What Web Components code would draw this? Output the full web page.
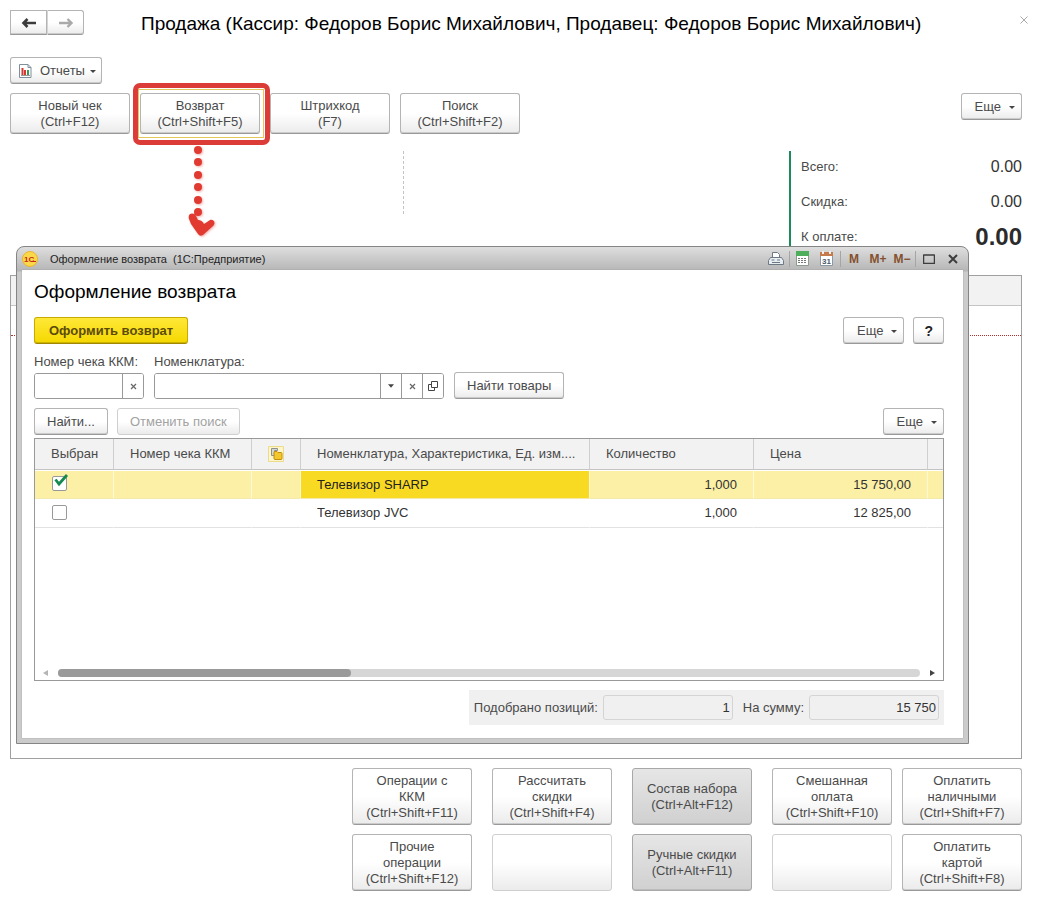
<!DOCTYPE html>
<html lang="ru">
<head>
<meta charset="utf-8">
<meta name="viewport" content="width=device-width, initial-scale=1">
<title>Продажа</title>
<style>
    body {
        margin: 0;
        background: #fff;
        color: #4a4a4a;
        font: 13px/16px "Liberation Sans", Arial, sans-serif;
    }
</style>
</head>
<body>
<sale-page></sale-page>

<script>
// Small helper: every element renders a static template once
class BaseElement extends HTMLElement {
    connectedCallback() {
        if (this.shadowRoot) return;
        this.attachShadow({ mode: 'open' });
        this.shadowRoot.innerHTML = this.render();
    }
}

class UiButton extends BaseElement {
    render() {
        const disabled = this.hasAttribute('disabled') ? 'disabled' : '';
        const caret = this.hasAttribute('menu') ? '<span class="caret"></span>' : '';
        const label = this.getAttribute('label') ? `aria-label="${this.getAttribute('label')}"` : '';
        return `
            <style>
                :host { display: inline-block; }
                button {
                    box-sizing: border-box;
                    width: 100%;
                    height: 100%;
                    min-height: 27px;
                    padding: 0 12px;
                    display: flex;
                    align-items: center;
                    justify-content: center;
                    border: 1px solid #b4b4b4;
                    border-bottom-color: #999;
                    border-radius: 3px;
                    background: linear-gradient(#fff 50%, #ebebeb);
                    box-shadow: inset 0 -1px 0 #cbcbcb;
                    color: inherit;
                    font: inherit;
                    white-space: nowrap;
                }
                button:hover { background: #f4f4f4; }
                :host([disabled]) button {
                    color: #a2a2a2;
                    border-color: #cfcfcf;
                    box-shadow: none;
                }
                :host([tall]) button { min-height: 41px; padding: 0 4px; }
                :host([large]) button { min-height: 57px; padding: 0 4px; }
                :host([menu]) button { padding: 0 6px 0 13px; }
                :host([icon]) button { padding: 0 5px 0 8px; }
                :host([square]) button { padding: 0 10px; color: #222; font-size: 14px; font-weight: bold; }
                :host([pressed]) button {
                    background: linear-gradient(#e6e6e6, #d0d0d0);
                    border-color: #a8a8a8;
                    box-shadow: inset 0 -1px 0 #bcbcbc;
                }
                :host([primary]) button {
                    padding: 0 14px;
                    border-color: #c9ab00;
                    border-bottom-color: #a08800;
                    background: linear-gradient(#ffe838, #f5d800);
                    box-shadow: inset 0 -1px 0 #cdb200;
                    color: #5c4b08;
                    font-weight: bold;
                }
                .caret {
                    margin: 2px 0 0 8px;
                    border: 3px solid transparent;
                    border-top-color: #444;
                    border-bottom: 0;
                }
                :host([icon]) .caret { margin-left: 5px; }
            </style>
            <button type="button" ${disabled} ${label}><slot name="icon"></slot><span><slot></slot></span>${caret}</button>
        `;
    }
}

class HistoryNav extends BaseElement {
    render() {
        return `
            <style>
                :host { display: flex; }
                button {
                    box-sizing: border-box;
                    width: 37px;
                    height: 25px;
                    padding: 0;
                    border: 1px solid #b4b4b4;
                    border-bottom-color: #999;
                    background: linear-gradient(#fff 50%, #ebebeb);
                    box-shadow: inset 0 -1px 0 #cbcbcb;
                    color: #3c3c3c;
                }
                button:first-child { border-radius: 3px 0 0 3px; border-right-width: 0; }
                button:last-child { border-radius: 0 3px 3px 0; color: #a9a9a9; border-left-color: #d5d5d5; }
                svg { display: block; margin: auto; }
            </style>
            <button type="button" aria-label="Назад"><svg width="16" height="10" viewBox="0 0 16 10"><path d="M15 5H3M6.500 1L2.500 5l4 4" fill="none" stroke="currentColor" stroke-width="2.600"/></svg></button>
            <button type="button" aria-label="Вперед"><svg width="16" height="10" viewBox="0 0 16 10"><path d="M1 5h12M9.500 1l4 4-4 4" fill="none" stroke="currentColor" stroke-width="2.400"/></svg></button>
        `;
    }
}

// Red frame with a dotted arrow that leads from a command to its window
class CallOut extends BaseElement {
    render() {
        const dots = [6, 18, 31, 43, 56, 68].map(y => `<circle cx="13" cy="${y}" r="4"/>`).join('');
        return `
            <style>
                :host { display: block; position: relative; }
                .frame {
                    position: absolute;
                    inset: -10px -10px -11px -7px;
                    border: 5px solid #db3c37;
                    border-radius: 7px;
                    pointer-events: none;
                }
                .focus {
                    position: absolute;
                    inset: -4px -4px -4px -2px;
                    border: 1px solid #e3c75a;
                    pointer-events: none;
                }
                svg {
                    position: absolute;
                    left: 45px;
                    top: 51px;
                    pointer-events: none;
                    filter: drop-shadow(1px 1px 1px rgba(219, 60, 55, 0.4));
                }
            </style>
            <slot></slot>
            <div class="focus"></div>
            <div class="frame"></div>
            <svg width="34" height="96" viewBox="0 0 34 96" fill="#e03a31">
                ${dots}
                <path d="M4 75C2 69 9 68 11 72L13 76Q17 76 19 80L25 76C29 75 31 79 28 82L18 91Q15 93 13 90L6 80Z"/>
            </svg>
        `;
    }
}

class TotalRow extends BaseElement {
    render() {
        return `
            <style>
                :host { display: flex; justify-content: space-between; align-items: center; height: 32px; }
                output { color: #333; font-size: 16px; }
                :host([due]) output { color: #2b2b2b; font-size: 24px; font-weight: bold; }
            </style>
            <span id="name"><slot></slot></span>
            <output aria-labelledby="name">${this.getAttribute('value')}</output>
        `;
    }
}

class TextField extends BaseElement {
    render() {
        const icons = {
            menu: '<svg width="6" height="4" viewBox="0 0 7 4"><path d="M0 0h7L3.500 4z" fill="#444"/></svg>',
            clear: '<svg width="7" height="7" viewBox="0 0 7 7"><path d="M1 1l5 5M6 1L1 6" stroke="#666" stroke-width="1.200"/></svg>',
            open: '<svg width="10" height="10" viewBox="0 0 10 10" fill="none" stroke="#444"><path d="M3.500 .5h6v6h-6zM3.500 3.500h-3v6h6v-3"/></svg>'
        };
        const titles = { menu: 'Выбрать', clear: 'Очистить', open: 'Открыть' };
        const buttons = this.getAttribute('actions').split(' ')
            .map(name => `<button type="button" aria-label="${titles[name]}">${icons[name]}</button>`).join('');
        return `
            <style>
                :host { display: block; }
                label { display: block; margin-bottom: 3px; white-space: nowrap; }
                .box {
                    box-sizing: border-box;
                    display: flex;
                    height: 26px;
                    border: 1px solid #999;
                    border-radius: 3px;
                    background: #fff;
                    overflow: hidden;
                }
                input { flex: 1; min-width: 0; padding: 0 6px; border: 0; outline: 0; font: inherit; color: #222; }
                button {
                    display: flex;
                    align-items: center;
                    justify-content: center;
                    width: 21px;
                    padding: 0;
                    border: 0;
                    border-left: 1px solid #999;
                    background: #fff;
                }
            </style>
            <label for="field"><slot></slot></label>
            <div class="box"><input id="field" type="text">${buttons}</div>
        `;
    }
}

class SummaryField extends BaseElement {
    render() {
        return `
            <style>
                :host { display: flex; align-items: center; gap: 5px; }
                input {
                    box-sizing: border-box;
                    width: 130px;
                    height: 25px;
                    padding: 0 2px;
                    border: 1px solid #d4d4d4;
                    border-radius: 3px;
                    background: #f0f0f0;
                    color: #333;
                    font: inherit;
                    text-align: right;
                }
            </style>
            <label for="field"><slot></slot></label>
            <input id="field" type="text" readonly value="${this.getAttribute('value')}">
        `;
    }
}

class GoodsTable extends BaseElement {
    render() {
        return `
            <style>
                :host { display: flex; flex-direction: column; min-height: 241px; border: 1px solid #999; color: #333; }
                table { width: 100%; border-collapse: separate; border-spacing: 0; table-layout: fixed; }
                th {
                    height: 31px;
                    padding: 0 16px;
                    border-right: 1px solid #cfcfcf;
                    border-bottom: 1px solid #c4c4c4;
                    background: #f2f2f2;
                    color: #4a4a4a;
                    font-weight: normal;
                    text-align: left;
                    white-space: nowrap;
                    overflow: hidden;
                }
                td {
                    height: 29px;
                    padding: 0 16px;
                    border-right: 1px solid transparent;
                    border-bottom: 1px solid #e2e2e2;
                    white-space: nowrap;
                }
                th, td { box-sizing: border-box; }
                th:last-child, td:last-child { padding: 0; border-right: 0; }
                tr.selected td {
                    background: #fbf0a5;
                    background-clip: padding-box;
                    border-top: 1px solid #fff;
                    border-right: 1px solid #fff8d6;
                    border-bottom: 1px solid #f3e9a8;
                }
                tr.selected td.current { background-color: #f9da22; color: #222; }
                tr.selected td:last-child { border-right: 0; }
                .num { text-align: right; }
                .pic svg { display: block; }
                input {
                    appearance: none;
                    box-sizing: border-box;
                    display: block;
                    width: 15px;
                    height: 15px;
                    margin: 0 0 2px 1px;
                    border: 1px solid #999;
                    border-radius: 2px;
                    background: #fff;
                }
                .tick { position: relative; }
                .tick svg { position: absolute; left: 3px; top: -2px; display: none; pointer-events: none; }
                input:checked + svg { display: block; }
                .scroll { display: flex; align-items: center; gap: 10px; margin-top: auto; padding: 3px 8px; }
                .track { flex: 1; height: 8px; border-radius: 4px; background: #d6d6d6; }
                .thumb { width: 34%; height: 8px; border-radius: 4px; background: #9a9a9a; }
            </style>
            <table>
                <colgroup>
                    <col style="width: 79px"><col style="width: 138px"><col style="width: 49px"><col>
                    <col style="width: 164px"><col style="width: 174px"><col style="width: 15px">
                </colgroup>
                <thead>
                    <tr>
                        <th>Выбран</th>
                        <th>Номер чека ККМ</th>
                        <th class="pic">
                            <svg width="16" height="16" viewBox="0 0 16 16" role="img" aria-label="Состав">
                                <path d="M.5 .5h15v15H.5z" fill="#fdf6cd" stroke="#ecdc8a"/>
                                <path d="M3.500 9.500v-7h6v2h-3v5z" fill="#d5d8d6" stroke="#8d918b"/>
                                <path d="M6 6.500q0-1 1-1h2l1 1h3q1 0 1 1v5q0 1-1 1H7q-1 0-1-1z" fill="#f4c72c" stroke="#c08d10"/>
                            </svg>
                        </th>
                        <th>Номенклатура, Характеристика, Ед. изм....</th>
                        <th>Количество</th>
                        <th>Цена</th>
                        <th></th>
                    </tr>
                </thead>
                <tbody>
                    <tr class="selected">
                        <td><div class="tick"><input type="checkbox" checked aria-label="Телевизор SHARP"><svg width="14" height="13" viewBox="0 0 14 13"><path d="M1.500 5.500l3.500 4.500L13 1" fill="none" stroke="#15894f" stroke-width="2.800"/></svg></div></td>
                        <td></td><td></td>
                        <td class="current">Телевизор SHARP</td>
                        <td class="num">1,000</td>
                        <td class="num">15 750,00</td>
                        <td></td>
                    </tr>
                    <tr>
                        <td><input type="checkbox" aria-label="Телевизор JVC"></td>
                        <td></td><td></td>
                        <td>Телевизор JVC</td>
                        <td class="num">1,000</td>
                        <td class="num">12 825,00</td>
                        <td></td>
                    </tr>
                </tbody>
            </table>
            <div class="scroll">
                <svg width="5" height="6" viewBox="0 0 5 6"><path d="M5 0v6L0 3z" fill="#b5b5b5"/></svg>
                <div class="track"><div class="thumb"></div></div>
                <svg width="5" height="6" viewBox="0 0 5 6"><path d="M0 0v6l5-3z" fill="#444"/></svg>
            </div>
        `;
    }
}

class AppWindow extends BaseElement {
    render() {
        return `
            <style>
                :host {
                    display: block;
                    box-sizing: border-box;
                    padding: 0 5px 5px;
                    border: 1px solid #858585;
                    border-radius: 8px 8px 0 0;
                    background: linear-gradient(#dedede, #b5b5b5 24px, #cbcbcb 25px);
                }
                header { display: flex; align-items: center; height: 23px; margin-right: -2px; color: #222; font-size: 11px; }
                .logo { margin-right: 12px; }
                .title { flex: 1; white-space: pre; }
                .tools { display: flex; align-items: center; }
                button {
                    display: flex;
                    align-items: center;
                    justify-content: center;
                    width: 24px;
                    height: 20px;
                    padding: 0;
                    border: 0;
                    background: none;
                    color: #84502e;
                    font: bold 12px/16px "Liberation Sans", Arial, sans-serif;
                }
                i { width: 1px; height: 16px; margin: 0 1px; background: #a5a5a5; }
                .body { padding: 12px 19px 13px 12px; background: #fff; box-shadow: 0 0 1px #888; }
            </style>
            <header>
                <svg class="logo" width="16" height="16" viewBox="0 0 16 16" aria-hidden="true">
                    <circle cx="8" cy="8" r="7.500" fill="#fbd84a" stroke="#e9b62c"/>
                    <text x="2" y="11" font-size="8" font-weight="bold" fill="#c8281c">1С</text>
                    <path d="M9 10.500h5" stroke="#c8281c"/>
                </svg>
                <span class="title"><slot name="title"></slot></span>
                <div class="tools">
                    <button type="button" aria-label="Печать"><svg width="16" height="15" viewBox="0 0 16 15" fill="#fff" stroke="#6d7884"><path d="M4.500 7V1.500h5L11.500 3.500V7"/><path d="M2.500 6.500h11l2 3v4H.5v-4z" fill="#e8edf2"/><path d="M4 11.500h8M3.500 9h3M9 9h3"/></svg></button>
                    <i></i>
                    <button type="button" aria-label="Калькулятор"><svg width="14" height="15" viewBox="0 0 14 15"><path d="M.5 .5h12v14H.5z" fill="#fff" stroke="#8c9a90"/><path d="M0 0h13v5H0z" fill="#4fae5c"/><path d="M2 7.500h9M2 9.500h9M2 11.500h9" stroke="#777" stroke-dasharray="2 1"/></svg></button>
                    <button type="button" aria-label="Календарь"><svg width="14" height="15" viewBox="0 0 14 15"><path d="M.5 2.500h12v12H.5z" fill="#fff" stroke="#8a97a5"/><path d="M0 1h13v4H0z" fill="#c47a4b"/><path d="M3 0v3M10 0v3" stroke="#eee" stroke-width="2"/><text x="2" y="13" font-size="8" font-weight="bold" fill="#4a5a6a">31</text></svg></button>
                    <i></i>
                    <button type="button">M</button>
                    <button type="button">M+</button>
                    <button type="button">M−</button>
                    <i></i>
                    <button type="button" aria-label="Развернуть"><svg width="12" height="10" viewBox="0 0 12 10"><path d="M.5 1h11M.5 .5v9h11v-9" fill="none" stroke="#3d3d3d" stroke-width="1.500"/></svg></button>
                    <button type="button" aria-label="Закрыть"><svg width="10" height="10" viewBox="0 0 10 10"><path d="M1 1l8 8M9 1L1 9" stroke="#3d3d3d" stroke-width="2"/></svg></button>
                </div>
            </header>
            <div class="body"><slot></slot></div>
        `;
    }
}

class ReturnForm extends BaseElement {
    render() {
        return `
            <style>
                :host { display: block; }
                h2 { margin: 0 0 15px; color: #000; font-size: 19px; line-height: 20px; font-weight: normal; }
                .row { display: flex; gap: 9px; }
                .push { margin-left: auto; }
                .filters { align-items: flex-end; gap: 10px; margin: 10px 0 9px; }
                .number { width: 110px; }
                .item { width: 290px; }
                goods-table { margin-top: 3px; }
                footer {
                    display: flex;
                    gap: 10px;
                    width: max-content;
                    margin: 9px 0 0 auto;
                    padding: 5px;
                    background: #f0f0f0;
                }
            </style>
            <h2>Оформление возврата</h2>
            <div class="row">
                <ui-button primary>Оформить возврат</ui-button>
                <ui-button menu class="push">Еще</ui-button>
                <ui-button square>?</ui-button>
            </div>
            <div class="row filters">
                <text-field class="number" actions="clear">Номер чека ККМ:</text-field>
                <text-field class="item" actions="menu clear open">Номенклатура:</text-field>
                <ui-button>Найти товары</ui-button>
            </div>
            <div class="row">
                <ui-button>Найти...</ui-button>
                <ui-button disabled>Отменить поиск</ui-button>
                <ui-button menu class="push">Еще</ui-button>
            </div>
            <goods-table></goods-table>
            <footer>
                <summary-field value="1">Подобрано позиций:</summary-field>
                <summary-field value="15 750">На сумму:</summary-field>
            </footer>
        `;
    }
}

class SalePage extends BaseElement {
    render() {
        return `
            <style>
                :host { display: block; position: relative; padding: 10px 16px 10px 10px; }
                header { display: flex; align-items: flex-start; }
                h1 { flex: 1; margin: 3px 0 0 57px; color: #000; font-size: 19px; line-height: 22px; font-weight: normal; }
                .close { margin: 5px -12px 0 0; padding: 0; width: 20px; height: 10px; border: 0; background: none; line-height: 0; }
                .reports { display: block; width: max-content; margin-top: 22px; }
                .reports svg { display: block; margin-right: 8px; }
                .commands { display: flex; align-items: flex-start; gap: 10px; margin-top: 9px; }
                .commands [tall] { display: block; width: 120px; }
                .commands .push { margin-left: auto; }
                .summary { display: flex; justify-content: space-between; height: 124px; margin-top: 17px; }
                .divider { height: 63px; margin-left: 393px; border-left: 1px dashed #c4c4c4; }
                .totals {
                    display: flex;
                    flex-direction: column;
                    gap: 3px;
                    width: 221px;
                    height: 104px;
                    padding-left: 10px;
                    border-left: 2px solid #1c8a5a;
                }
                .journal { height: 482px; border: 1px solid #a0a0a0; }
                .journal .head { height: 29px; border-bottom: 1px solid #c4c4c4; background: #f2f2f2; }
                .journal .line { height: 29px; border-bottom: 1px dotted #b03030; }
                .payments { display: flex; justify-content: flex-end; gap: 20px; margin-top: 9px; }
                .payments ui-button { width: 120px; }
                .payments ui-button:last-child { margin-left: -10px; }
            </style>
            <style>
                app-window { position: absolute; left: 16px; right: 69px; top: 246px; }
            </style>
            <header>
                <history-nav></history-nav>
                <h1>Продажа (Кассир: Федоров Борис Михайлович, Продавец: Федоров Борис Михайлович)</h1>
                <button type="button" class="close" aria-label="Закрыть"><svg width="8" height="8" viewBox="0 0 8 8"><path d="M.5 .5l7 7M7.500 .5l-7 7" stroke="#aaa"/></svg></button>
            </header>
            <ui-button menu icon class="reports">
                <svg slot="icon" width="13" height="14" viewBox="0 0 13 14"><path d="M.5 .5h8.500l3 3v10H.5z" fill="#fff" stroke="#7e8f9d"/><path d="M9 .5v3h3" fill="none" stroke="#7e8f9d"/><path d="M3.500 4v7M6 6v5" stroke="#d33a34" stroke-width="2"/><path d="M9 6v5" stroke="#3b9a59" stroke-width="2"/><path d="M2 11.500h9" stroke="#999"/></svg>
                Отчеты
            </ui-button>
            <div class="commands">
                <ui-button tall>Новый чек<br>(Ctrl+F12)</ui-button>
                <call-out><ui-button tall>Возврат<br>(Ctrl+Shift+F5)</ui-button></call-out>
                <ui-button tall>Штрихкод<br>(F7)</ui-button>
                <ui-button tall>Поиск<br>(Ctrl+Shift+F2)</ui-button>
                <ui-button menu class="push">Еще</ui-button>
            </div>
            <div class="summary">
                <div class="divider"></div>
                <div class="totals">
                    <total-row value="0.00">Всего:</total-row>
                    <total-row value="0.00">Скидка:</total-row>
                    <total-row value="0.00" due>К оплате:</total-row>
                </div>
            </div>
            <div class="journal">
                <div class="head"></div>
                <div class="line"></div>
            </div>
            <div class="payments">
                <ui-button large>Операции с<br>ККМ<br>(Ctrl+Shift+F11)</ui-button>
                <ui-button large>Рассчитать<br>скидки<br>(Ctrl+Shift+F4)</ui-button>
                <ui-button large pressed>Состав набора<br>(Ctrl+Alt+F12)</ui-button>
                <ui-button large>Смешанная<br>оплата<br>(Ctrl+Shift+F10)</ui-button>
                <ui-button large>Оплатить<br>наличными<br>(Ctrl+Shift+F7)</ui-button>
            </div>
            <div class="payments">
                <ui-button large>Прочие<br>операции<br>(Ctrl+Shift+F12)</ui-button>
                <ui-button large disabled label="Свободная кнопка"></ui-button>
                <ui-button large pressed>Ручные скидки<br>(Ctrl+Alt+F11)</ui-button>
                <ui-button large disabled label="Свободная кнопка"></ui-button>
                <ui-button large>Оплатить<br>картой<br>(Ctrl+Shift+F8)</ui-button>
            </div>
            <app-window>
                <span slot="title">Оформление возврата  (1С:Предприятие)</span>
                <return-form></return-form>
            </app-window>
        `;
    }
}

customElements.define('ui-button', UiButton);
customElements.define('history-nav', HistoryNav);
customElements.define('call-out', CallOut);
customElements.define('total-row', TotalRow);
customElements.define('text-field', TextField);
customElements.define('summary-field', SummaryField);
customElements.define('goods-table', GoodsTable);
customElements.define('app-window', AppWindow);
customElements.define('return-form', ReturnForm);
customElements.define('sale-page', SalePage);
</script>
</body>
</html>
